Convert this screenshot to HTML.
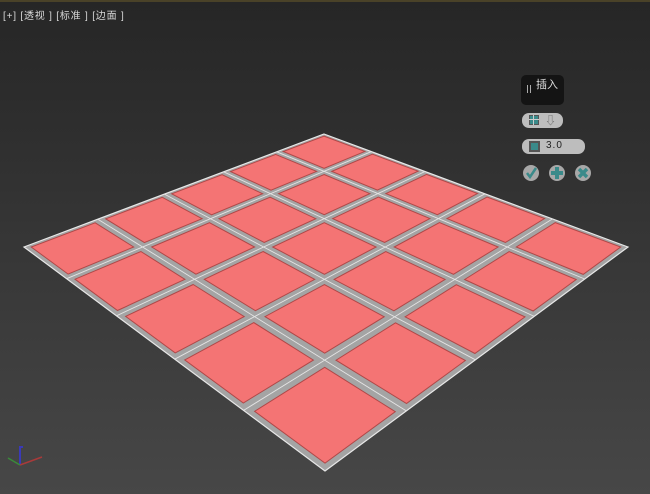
<!DOCTYPE html>
<html><head><meta charset="utf-8"><style>
html,body{margin:0;padding:0;}
body{width:650px;height:494px;overflow:hidden;position:relative;background:linear-gradient(#262626 0%,#333 40%,#474747 100%);font-family:"Liberation Sans","Noto Sans CJK SC",sans-serif;}
#top{position:absolute;left:0;top:0;width:650px;height:2px;background:#4a4228;}
#lbl{position:absolute;left:3px;top:7px;color:#d8d8d8;font-size:10px;letter-spacing:0.8px;}
svg{position:absolute;left:0;top:0;}
.w{position:absolute;}
</style></head><body>
<div id="top"></div>
<div id="lbl">[+] [透视 ] [标准 ] [边面 ]</div>
<svg id="s" width="650" height="494"></svg>
<div class="w" style="left:521px;top:75px;width:43px;height:30px;background:#141414;border-radius:5px;"></div>
<div class="w" style="left:527px;top:85px;width:1px;height:8px;background:#aaa;"></div>
<div class="w" style="left:530px;top:85px;width:1px;height:8px;background:#aaa;"></div>
<div class="w" style="left:536px;top:76px;color:#ddd;font-size:11px;">插入</div>
<div class="w" style="left:522px;top:113px;width:41px;height:15px;background:#bdbdbd;border-radius:7px;"></div>
<div class="w" style="left:529px;top:115px;width:10px;height:10px;background:#3a8a8a;border:1px solid #555;box-sizing:border-box;"></div>
<div class="w" style="left:533px;top:115px;width:1px;height:10px;background:#ccc;"></div>
<div class="w" style="left:529px;top:119px;width:10px;height:1px;background:#ccc;"></div>
<div class="w" style="left:545px;top:112px;color:#666;font-size:11px;">⇩</div>
<div class="w" style="left:522px;top:139px;width:63px;height:15px;background:#bdbdbd;border-radius:7px;"></div>
<div class="w" style="left:529px;top:141px;width:11px;height:11px;background:#3a8a8a;border:2px solid #555;box-sizing:border-box;"></div>
<div class="w" style="left:546px;top:140px;color:#222;font-size:10px;letter-spacing:1px;">3.0</div>
<svg width="650" height="494" style="pointer-events:none">
<circle cx="531" cy="173" r="8" fill="#a8a8a8"/>
<path d="M527 173 L530 177 L536 168" stroke="#3a8a8a" stroke-width="2.5" fill="none"/>
<circle cx="557" cy="173" r="8" fill="#a8a8a8"/>
<path d="M557 167 V179 M551 173 H563" stroke="#3a8a8a" stroke-width="4"/>
<circle cx="583" cy="173" r="8" fill="#a8a8a8"/>
<path d="M579 169 L587 177 M587 169 L579 177" stroke="#3a8a8a" stroke-width="3.5"/>
<path d="M20 465 V447 h3" stroke="#3a3ab8" stroke-width="2" fill="none"/>
<path d="M20 465 L42 457" stroke="#a83a3a" stroke-width="1.5"/>
<path d="M20 465 L8 458" stroke="#3a8a3a" stroke-width="1.5"/>
</svg>
<script>
var P=[[324,134],[628,247],[325,471],[24,247]];
function H(){var x0=P[0][0],y0=P[0][1],x1=P[1][0],y1=P[1][1],x2=P[2][0],y2=P[2][1],x3=P[3][0],y3=P[3][1];
var dx1=x1-x2,dx2=x3-x2,dy1=y1-y2,dy2=y3-y2,sx=x0-x1+x2-x3,sy=y0-y1+y2-y3;
var den=dx1*dy2-dx2*dy1;var g=(sx*dy2-dx2*sy)/den,h=(dx1*sy-sx*dy1)/den;
return [x1-x0+g*x1,x3-x0+h*x3,x0,y1-y0+g*y1,y3-y0+h*y3,y0,g,h];}
var M=H();
function pt(u,v){var w=M[6]*u+M[7]*v+1;return ((M[0]*u+M[1]*v+M[2])/w).toFixed(1)+","+((M[3]*u+M[4]*v+M[5])/w).toFixed(1);}
function poly(u0,v0,u1,v1,f,s,sw){return '<polygon points="'+pt(u0,v0)+' '+pt(u1,v0)+' '+pt(u1,v1)+' '+pt(u0,v1)+'" fill="'+f+'" stroke="'+s+'" stroke-width="'+sw+'"/>';}
var out=poly(0,0,1,1,"#a4a4a4","#e8e8e8",1.2);
var m=0.012,g=0.03,t=(1-2*m-4*g)/5;
for(var i=0;i<5;i++)for(var j=0;j<5;j++){var u=m+i*(t+g),v=m+j*(t+g);out+=poly(u,v,u+t,v+t,"#f47474","#b04848",1);}
for(var k=1;k<5;k++){var c=m+k*(t+g)-g/2;
out+='<line x1="'+pt(c,0).split(",")[0]+'" y1="'+pt(c,0).split(",")[1]+'" x2="'+pt(c,1).split(",")[0]+'" y2="'+pt(c,1).split(",")[1]+'" stroke="#e4e4e4" stroke-width="0.9"/>';
out+='<line x1="'+pt(0,c).split(",")[0]+'" y1="'+pt(0,c).split(",")[1]+'" x2="'+pt(1,c).split(",")[0]+'" y2="'+pt(1,c).split(",")[1]+'" stroke="#e4e4e4" stroke-width="0.9"/>';}
document.getElementById("s").innerHTML=out;
</script>
</body></html>
